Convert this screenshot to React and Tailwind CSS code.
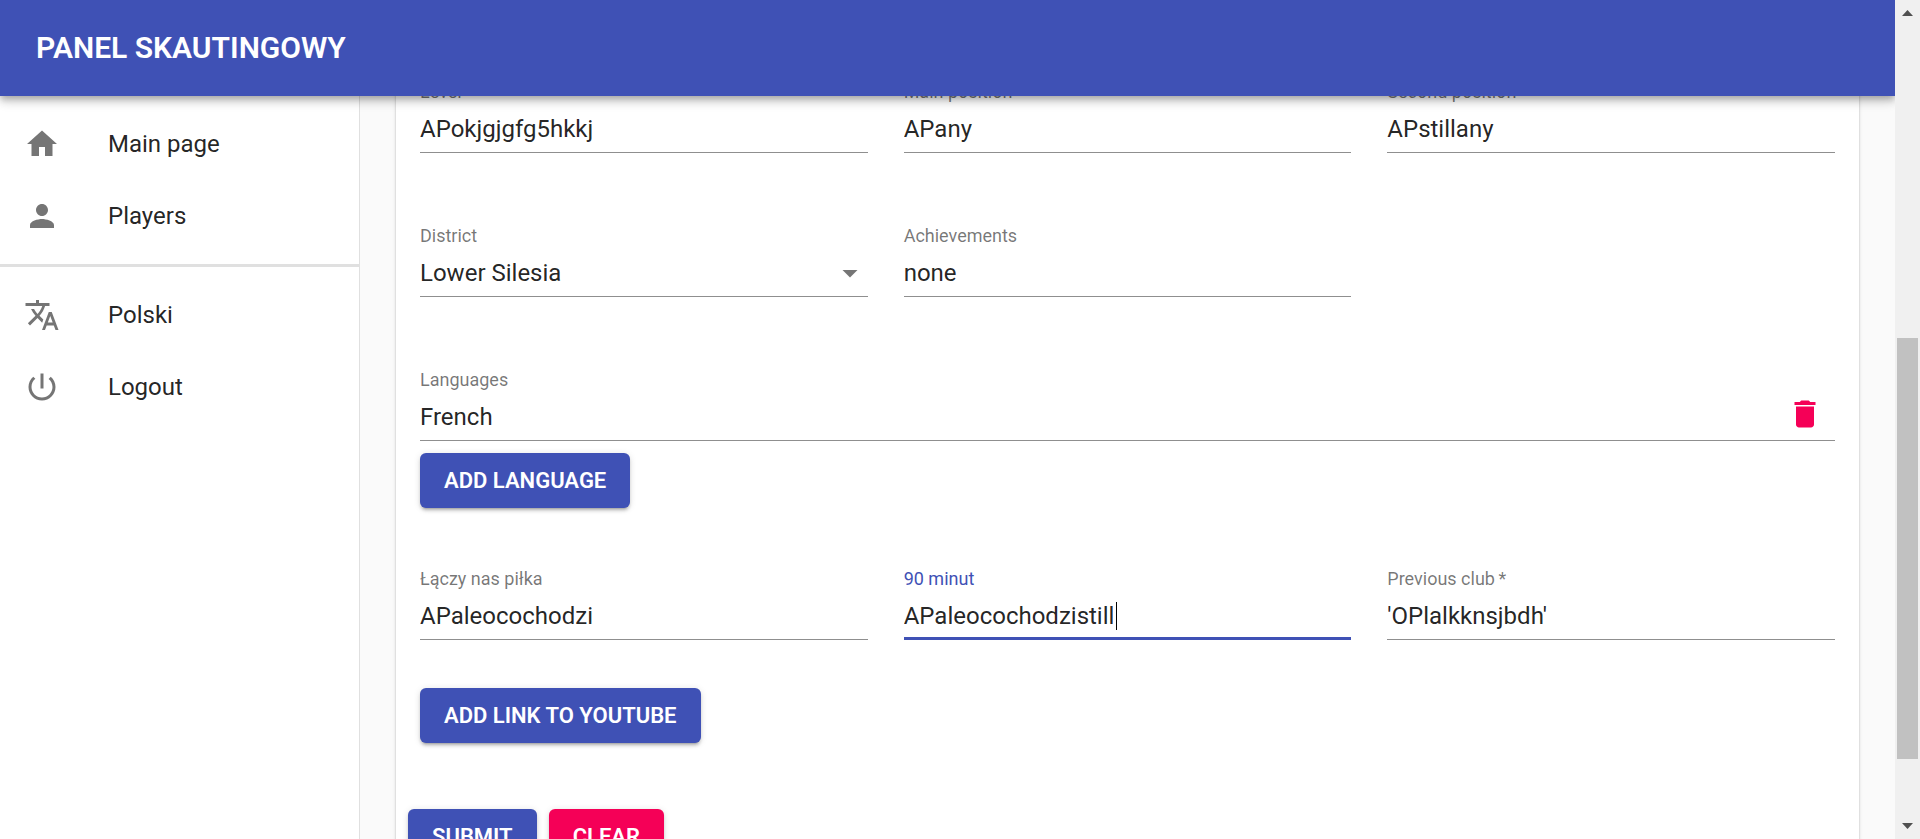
import React from "react";

const icons = {
  home: "M10 20v-6h4v6h5v-8h3L12 3 2 12h3v8z",
  person:
    "M12 12c2.21 0 4-1.79 4-4s-1.79-4-4-4-4 1.79-4 4 1.79 4 4 4zm0 2c-2.67 0-8 1.34-8 4v2h16v-2c0-2.66-5.33-4-8-4z",
  translate:
    "M12.87 15.07l-2.54-2.51.03-.03c1.74-1.94 2.98-4.17 3.71-6.53H17V4h-7V2H8v2H1v1.99h11.17C11.5 7.92 10.44 9.75 9 11.35 8.07 10.32 7.3 9.19 6.69 8h-2c.73 1.63 1.73 3.17 2.98 4.56l-5.09 5.02L4 19l5-5 3.11 3.11.76-2.04zM18.5 10h-2L12 22h2l1.12-3h4.75L21 22h2l-4.5-12zm-2.62 7l1.62-4.33L19.12 17h-3.24z",
  power:
    "M13 3h-2v10h2V3zm4.83 2.17l-1.42 1.42C17.99 7.86 19 9.81 19 12c0 3.87-3.13 7-7 7s-7-3.13-7-7c0-2.19 1.01-4.14 2.58-5.42L6.17 5.17C4.23 6.82 3 9.26 3 12c0 4.97 4.03 9 9 9s9-4.03 9-9c0-2.74-1.23-5.18-3.17-6.83z",
  trash: "M6 19c0 1.1.9 2 2 2h8c1.1 0 2-.9 2-2V7H6v12zM19 4h-3.5l-1-1h-5l-1 1H5v2h14V4z",
  dropdown: "M7 10l5 5 5-5z",
};

function Icon({ name }) {
  return (
    <svg viewBox="0 0 24 24" className="size-9 shrink-0 fill-current" aria-hidden="true">
      <path d={icons[name]} />
    </svg>
  );
}

const inputClass = "min-w-0 flex-1 h-full bg-transparent text-2xl text-black/87 outline-none";

function Field({ id, label, value, focused, required, children }) {
  return (
    <div className="flex h-18 flex-col">
      <label
        htmlFor={id}
        className={`h-6 text-lg leading-[22px] ${focused ? "text-[#3f51b5]" : "text-black/54"}`}
      >
        {label}
        {required && "\u2009*"}
      </label>
      <div
        className={`relative flex h-12 items-center border-b border-[#8f8f8f] ${
          focused ? "after:absolute after:inset-x-0 after:-bottom-px after:h-[3px] after:bg-[#3f51b5]" : ""
        }`}
      >
        {children || (
          <input
            id={id}
            type="text"
            defaultValue={value}
            required={required}
            className={inputClass}
          />
        )}
        {focused && <span className="absolute left-[212px] h-7 w-px bg-black" aria-hidden="true" />}
      </div>
    </div>
  );
}

function Button({ children, color = "primary", type = "button" }) {
  return (
    <button
      type={type}
      className={`h-[55px] rounded-md px-6 text-[22px] font-semibold text-white uppercase shadow-[0_4px_2px_-3px_rgba(0,0,0,0.2),0_3px_3px_0_rgba(0,0,0,0.14),0_1px_7px_0_rgba(0,0,0,0.12)] ${
        color === "primary" ? "bg-[#3f51b5]" : "bg-[#f50057]"
      }`}
    >
      {children}
    </button>
  );
}

function NavItem({ icon, children }) {
  return (
    <li>
      <a href="#" className="flex h-18 items-center px-6 text-2xl text-black/87">
        <span className="w-21 text-black/54">
          <Icon name={icon} />
        </span>
        {children}
      </a>
    </li>
  );
}

function Scrollbar() {
  return (
    <div className="flex w-[25px] shrink-0 flex-col items-center bg-[#f0f0f0]" aria-hidden="true">
      <svg viewBox="0 0 25 26" className="h-[26px] w-full shrink-0 fill-[#505050]">
        <path d="M7 16 L12.500 10 L18 16z" />
      </svg>
      <div className="flex w-full flex-1 flex-col items-center">
        <div className="flex-[312]" />
        <div className="w-[21px] flex-[421] bg-[#c1c1c1]" />
        <div className="flex-[54]" />
      </div>
      <svg viewBox="0 0 25 26" className="h-[26px] w-full shrink-0 fill-[#505050]">
        <path d="M7 10 L12.500 16 L18 10z" />
      </svg>
    </div>
  );
}

export default function App() {
  return (
    <div className="flex h-screen overflow-hidden bg-[#fafafa] font-['Roboto',sans-serif]">
      <div className="relative flex min-w-0 flex-1 overflow-hidden">
        <header className="absolute inset-x-0 top-0 z-10 flex h-24 items-center bg-[#3f51b5] px-9 shadow-[0_3px_6px_-1px_rgba(0,0,0,0.2),0_6px_8px_0_rgba(0,0,0,0.14),0_2px_15px_0_rgba(0,0,0,0.12)]">
          <h1 className="text-3xl font-semibold text-white uppercase">Panel skautingowy</h1>
        </header>

        <nav className="w-90 shrink-0 border-r border-black/12 bg-white pt-24">
          <ul className="py-3">
            <NavItem icon="home">Main page</NavItem>
            <NavItem icon="person">Players</NavItem>
          </ul>
          <hr className="border-t-3 border-[#e0e0e0]" />
          <ul className="py-3">
            <NavItem icon="translate">Polski</NavItem>
            <NavItem icon="power">Logout</NavItem>
          </ul>
        </nav>

        <main className="min-w-0 flex-1 px-9">
          <form className="min-h-full bg-white px-3 pt-[81px] pb-6 shadow-[0_3px_2px_-1px_rgba(0,0,0,0.2),0_2px_2px_0_rgba(0,0,0,0.14),0_2px_4px_0_rgba(0,0,0,0.12)]">
            <div className="flex flex-col px-3">
              <div className="grid grid-cols-3 gap-x-9 gap-y-18">
                <Field id="level" label="Level" value="APokjgjgfg5hkkj" />
                <Field id="main-position" label="Main position" value="APany" />
                <Field id="second-position" label="Second position" value="APstillany" />

                <Field id="district" label="District">
                  <select id="district" className={`${inputClass} appearance-none`}>
                    <option>Lower Silesia</option>
                  </select>
                  <span className="pointer-events-none absolute right-0 text-black/54">
                    <Icon name="dropdown" />
                  </span>
                </Field>
                <Field id="achievements" label="Achievements" value="none" />

                <div className="col-span-3">
                  <Field id="languages" label="Languages">
                    <input id="languages" type="text" defaultValue="French" className={inputClass} />
                    <button type="button" aria-label="Delete language" className="px-3 pb-1.5 text-[#f50057]">
                      <Icon name="trash" />
                    </button>
                  </Field>
                </div>
              </div>

              <div className="mt-3">
                <Button>Add language</Button>
              </div>

              <div className="mt-15 grid grid-cols-3 gap-x-9">
                <Field id="laczy" label="Łączy nas piłka" value="APaleocochodzi" />
                <Field id="minut" label="90 minut" value="APaleocochodzistill" focused />
                <Field id="previous-club" label="Previous club" value="'OPlalkknsjbdh'" required />
              </div>

              <div className="mt-12">
                <Button>Add link to YouTube</Button>
              </div>
            </div>

            <div className="mt-[66px] flex gap-3">
              <Button type="submit">Submit</Button>
              <Button color="secondary">Clear</Button>
            </div>
          </form>
        </main>
      </div>
      <Scrollbar />
    </div>
  );
}
